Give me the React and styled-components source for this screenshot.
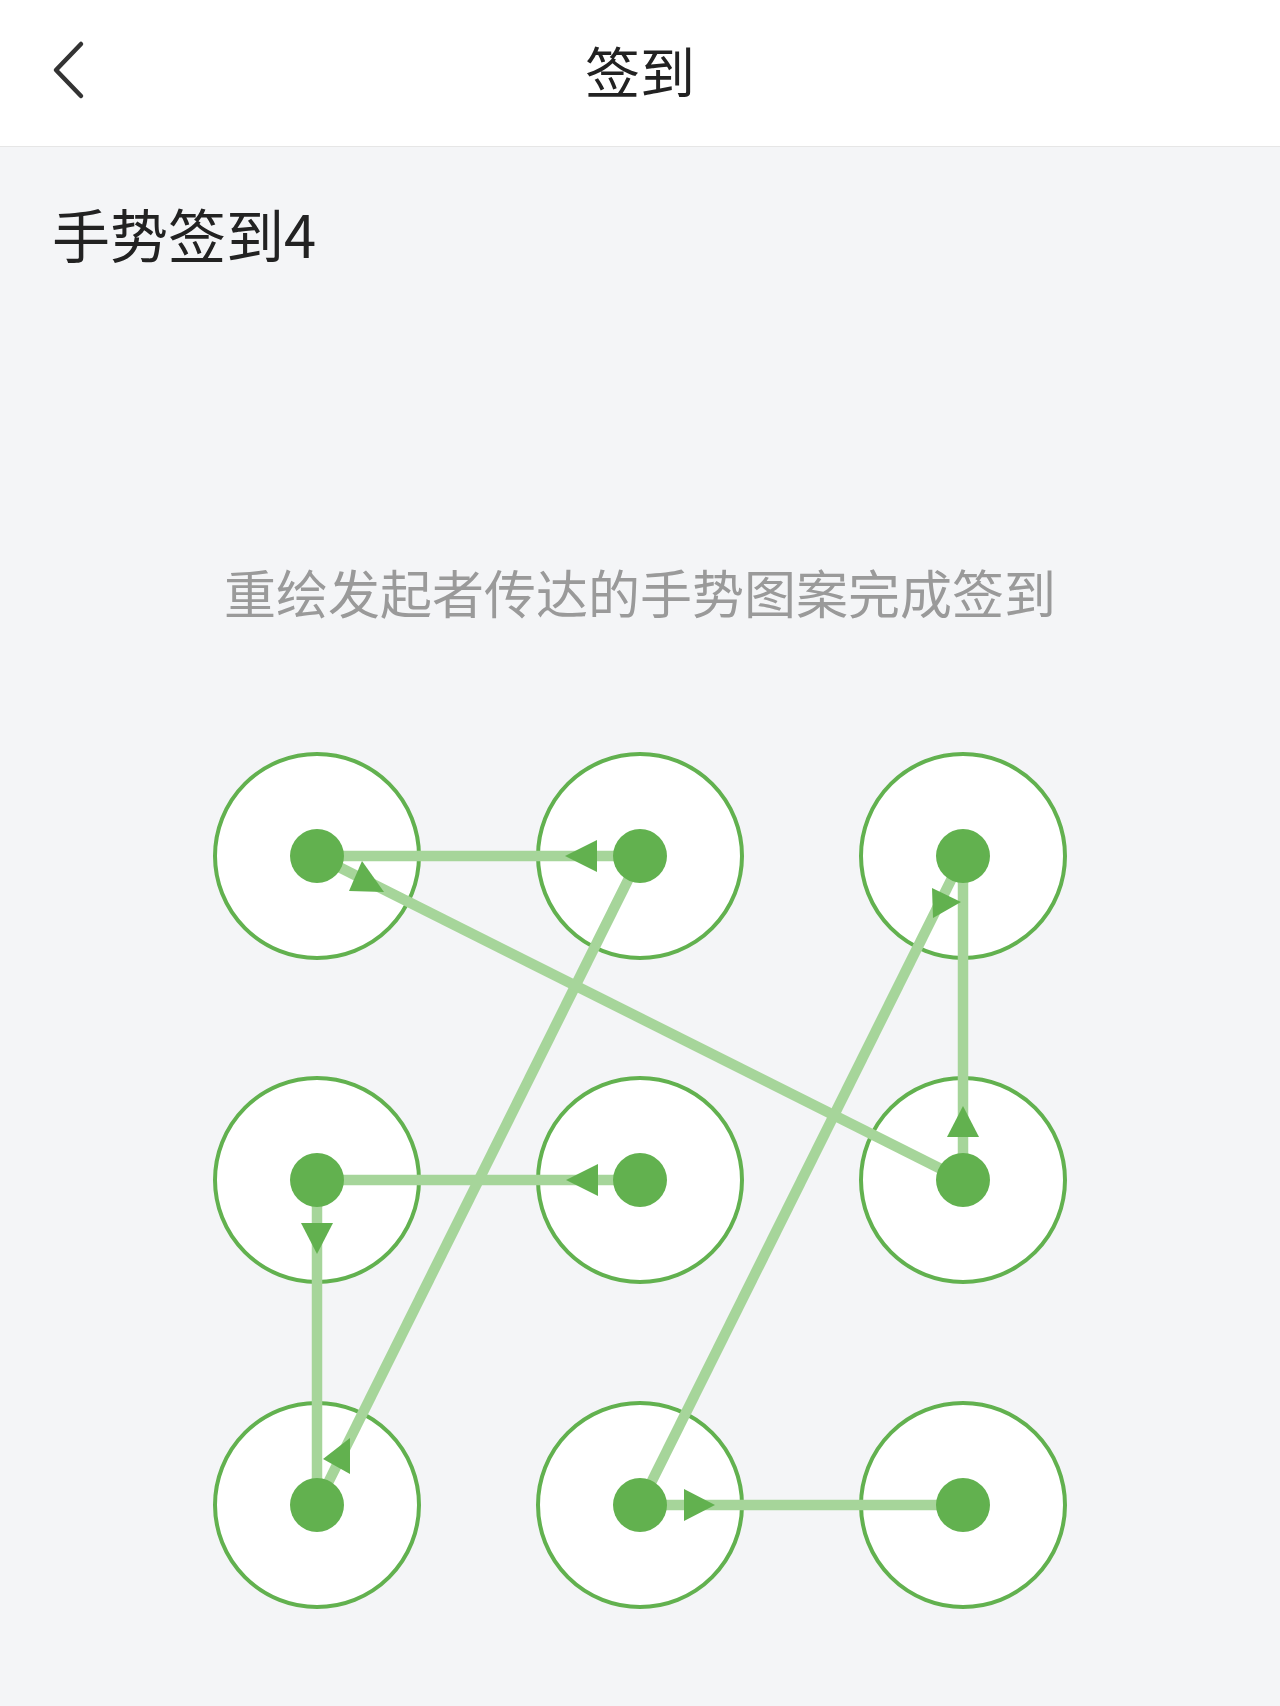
import React from "react";
import styled, { createGlobalStyle } from "styled-components";

const Global = createGlobalStyle`
  html, body {
    margin: 0;
    padding: 0;
    background: #f4f5f7;
    font-family: "Noto Sans CJK SC", "Noto Sans", sans-serif;
  }
`;

const Page = styled.div`
  min-height: 1706px;
  background: #f4f5f7;
  display: flex;
  flex-direction: column;
`;

const Header = styled.header`
  height: 147px;
  box-sizing: border-box;
  background: #ffffff;
  border-bottom: 1px solid #e6e6e6;
  display: grid;
  grid-template-columns: 1fr auto 1fr;
  align-items: center;
`;

const BackButton = styled.button`
  justify-self: start;
  margin-left: 44px;
  margin-bottom: 6px;
  width: 48px;
  height: 64px;
  padding: 0;
  border: none;
  background: transparent;
  display: flex;
  align-items: center;
  justify-content: center;
  cursor: pointer;
`;

const Title = styled.h1`
  margin: 0 0 8px;
  font-size: 55px;
  font-weight: 400;
  color: #222;
  line-height: 1;
`;

const Heading = styled.h2`
  margin: 50px 0 0 52px;
  font-size: 58px;
  font-weight: 400;
  color: #222;
  line-height: 72px;
`;

const Hint = styled.p`
  margin: 287px 0 0;
  text-align: center;
  font-size: 52px;
  color: #9a9a9a;
  line-height: 72px;
`;

const Board = styled.svg`
  display: block;
  margin: 111px auto 0;
  width: 880px;
  height: 880px;
`;

const GREEN = "#62b14f";
const LINE = "#a6d59a";

const xs = [117, 440, 763];
const ys = [117, 441, 766];
const pt = ([r, c]) => [xs[c], ys[r]];

const path = [
  [1, 1],
  [1, 0],
  [2, 0],
  [0, 1],
  [0, 0],
  [1, 2],
  [0, 2],
  [2, 1],
  [2, 2],
];

const OX = 200;
const OY = 740;
const arrows = [
  [[565, 857], [597, 841], [597, 873]],
  [[566, 1181], [598, 1165], [598, 1197]],
  [[963, 1107], [947, 1138], [979, 1138]],
  [[317, 1255], [301, 1224], [333, 1224]],
  [[715, 1506], [684, 1490], [684, 1522]],
  [[362, 862], [349, 892], [384, 893]],
  [[350, 1439], [323, 1460], [350, 1475]],
  [[932, 889], [961, 903], [933, 919]],
];

function Pattern() {
  const nodes = [];
  for (let r = 0; r < 3; r++) for (let c = 0; c < 3; c++) nodes.push([r, c]);
  return (
    <Board viewBox="0 0 880 880">
      {nodes.map(([r, c]) => (
        <circle
          key={`o${r}${c}`}
          cx={xs[c]}
          cy={ys[r]}
          r={102}
          fill="#ffffff"
          stroke={GREEN}
          strokeWidth={4}
        />
      ))}
      {path.slice(1).map((p, i) => {
        const [x1, y1] = pt(path[i]);
        const [x2, y2] = pt(p);
        return (
          <line
            key={`l${i}`}
            x1={x1}
            y1={y1}
            x2={x2}
            y2={y2}
            stroke={LINE}
            strokeWidth={10.5}
          />
        );
      })}
      {arrows.map((a, i) => (
        <polygon
          key={`a${i}`}
          points={a.map(([x, y]) => `${x - OX},${y - OY}`).join(" ")}
          fill={GREEN}
        />
      ))}
      {nodes.map(([r, c]) => (
        <circle key={`d${r}${c}`} cx={xs[c]} cy={ys[r]} r={27} fill={GREEN} />
      ))}
    </Board>
  );
}

export default function App() {
  return (
    <>
      <Global />
      <Page>
        <Header>
          <BackButton aria-label="返回">
            <svg width="40" height="60" viewBox="0 0 40 60">
              <polyline
                points="33,4 8,30 33,56"
                fill="none"
                stroke="#333"
                strokeWidth="4.5"
                strokeLinecap="round"
                strokeLinejoin="round"
              />
            </svg>
          </BackButton>
          <Title>签到</Title>
          <span />
        </Header>
        <Heading>手势签到4</Heading>
        <Hint>重绘发起者传达的手势图案完成签到</Hint>
        <Pattern />
      </Page>
    </>
  );
}
